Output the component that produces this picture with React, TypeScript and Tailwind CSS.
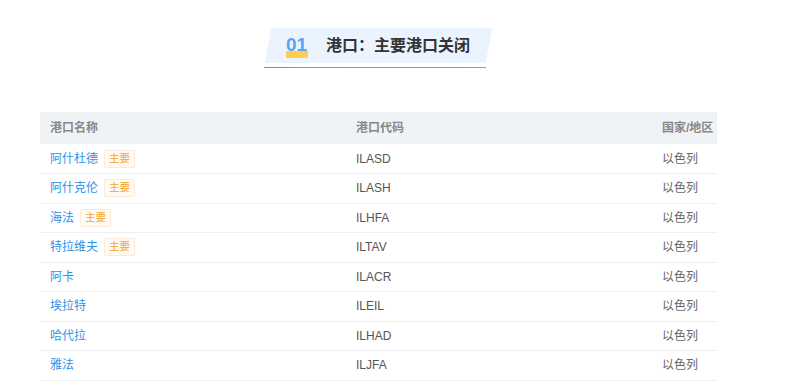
import React from 'react';

const rows = [
  { name: '阿什杜德', code: 'ILASD', main: true },
  { name: '阿什克伦', code: 'ILASH', main: true },
  { name: '海法', code: 'ILHFA', main: true },
  { name: '特拉维夫', code: 'ILTAV', main: true },
  { name: '阿卡', code: 'ILACR', main: false },
  { name: '埃拉特', code: 'ILEIL', main: false },
  { name: '哈代拉', code: 'ILHAD', main: false },
  { name: '雅法', code: 'ILJFA', main: false },
];

export default function App() {
  return (
    <div
      className="w-[790px] h-[392px] bg-white pl-[40px] pt-[28px]"
      style={{ fontFamily: '"Liberation Sans", "Noto Sans CJK SC", sans-serif' }}
    >
      <div className="w-[677px]">
        <div className="flex justify-center">
          <div className="w-[221px]">
            <div className="relative h-[35px]">
              <div className="absolute inset-0 bg-[#ebf4fe] -skew-x-[11deg]" />
              <div className="relative flex items-center h-full pl-[18px]">
                <span className="relative inline-block w-[22px] h-[24px]">
                  <span className="absolute left-0 right-0 top-[17px] h-[7px] bg-[#ffcd4f]" />
                  <span className="absolute left-0 top-[0px] text-[19px] font-bold leading-[22px] text-[#5ea2f3]">01</span>
                </span>
                <span className="ml-[18px] text-[16px] font-bold text-[#333]">港口：主要港口关闭</span>
              </div>
            </div>
            <div className="mt-[4px] h-[1px] w-[222px] -ml-[4px] bg-gradient-to-r from-[#4a9bf5] to-[#6aa5e5]" />
          </div>
        </div>

        <table className="mt-[44px] w-[677px] border-collapse text-[12px]">
          <thead>
            <tr className="bg-[#f0f3f6] h-[32px] text-[#888] font-bold">
              <th className="text-left font-bold pl-[10px] w-[306px]">港口名称</th>
              <th className="text-left font-bold pl-[10px] w-[306px]">港口代码</th>
              <th className="text-left font-bold pl-[10px]">国家/地区</th>
            </tr>
          </thead>
          <tbody>
            {rows.map((r) => (
              <tr key={r.code} className="h-[29.5px] border-b border-[#eeeff3]">
                <td className="pl-[10px]">
                  <div className="flex items-center">
                    <span className="text-[#2d93e8]">{r.name}</span>
                    {r.main && (
                      <span className="ml-[6px] px-[4px] h-[18px] flex items-center text-[10.5px] text-[#f3a52a] bg-[#fffaf3] border border-[#fcebd3] rounded-[2px]">
                        主要
                      </span>
                    )}
                  </div>
                </td>
                <td className="pl-[10px] text-[#555]">{r.code}</td>
                <td className="pl-[10px] text-[#666]">以色列</td>
              </tr>
            ))}
          </tbody>
        </table>
      </div>
    </div>
  );
}
